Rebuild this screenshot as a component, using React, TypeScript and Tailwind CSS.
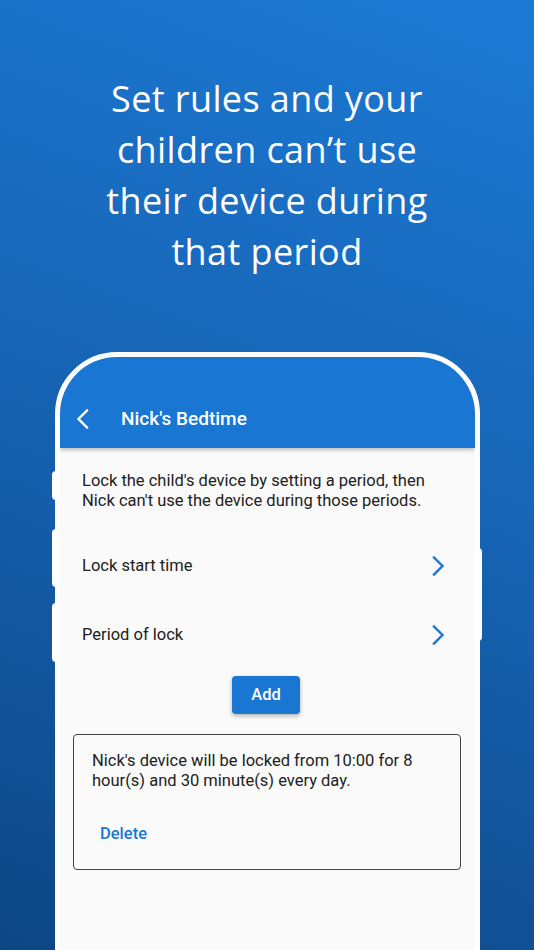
import React from "react";

function Chevron({ className }: { className?: string }) {
  return (
    <svg viewBox="0 0 14 22" className={className} fill="none">
      <path d="M3 2.5 L11.5 11 L3 19.5" stroke="currentColor" strokeWidth="2.4" strokeLinecap="square" />
    </svg>
  );
}

export default function App() {
  return (
    <div
      className="relative w-[534px] h-[950px] overflow-hidden bg-[linear-gradient(20deg,#0d4684,#1765b6_55%,#1c7ad5)]"
      style={{ fontFamily: "Roboto, 'Liberation Sans', sans-serif" }}
    >
      <h1
        className="pt-[73px] text-center text-white text-[36px] leading-[51px] font-normal tracking-[0.4px]"
        style={{ fontFamily: "'Open Sans', 'Liberation Sans', sans-serif" }}
      >
        Set rules and your
        <br />
        children can’t use
        <br />
        their device during
        <br />
        that period
      </h1>

      <div className="absolute left-[55px] top-[352px] w-[425px] h-[640px]">
        {/* side buttons */}
        <div className="absolute -left-[3px] top-[119px] w-[4px] h-[29px] bg-white rounded-l-sm" />
        <div className="absolute -left-[3px] top-[177px] w-[4px] h-[58px] bg-white rounded-l-sm" />
        <div className="absolute -left-[3px] top-[251px] w-[4px] h-[59px] bg-white rounded-l-sm" />
        <div className="absolute -right-[2px] top-[196px] w-[4px] h-[93px] bg-white rounded-r-sm" />

        <div className="h-full border-[5px] border-white rounded-t-[62px] bg-[#fafafa] overflow-hidden">
          <div className="h-[91px] bg-[#1976d2] flex items-end pb-[17px] shadow-[0_2px_4px_rgba(0,0,0,0.25)] relative z-10">
            <Chevron className="w-[14px] h-[22px] text-white ml-[16px] mb-[1px] rotate-180" />
            <div className="ml-[31px] text-white text-[19px] font-medium leading-[24px]">Nick's Bedtime</div>
          </div>

          <div className="pt-[23px] px-[22px] text-[16.5px] leading-[19.5px] text-[#212121]">
            Lock the child's device by setting a period, then
            <br />
            Nick can't use the device during those periods.
          </div>

          <div className="mt-[46px] flex items-center justify-between pl-[22px] pr-[30px] h-[20px] text-[16.5px] text-[#212121]">
            <span>Lock start time</span>
            <Chevron className="w-[14px] h-[22px] text-[#1976d2]" />
          </div>
          <div className="mt-[49px] flex items-center justify-between pl-[22px] pr-[30px] h-[20px] text-[16.5px] text-[#212121]">
            <span>Period of lock</span>
            <Chevron className="w-[14px] h-[22px] text-[#1976d2]" />
          </div>

          <div className="mt-[31px] flex justify-center pr-[3px]">
            <button className="w-[68px] h-[38px] rounded-[4px] bg-[#1976d2] text-white text-[16.5px] font-medium shadow-[0_2px_4px_rgba(0,0,0,0.3)]">
              Add
            </button>
          </div>

          <div className="mt-[20px] ml-[13px] w-[388px] h-[136px] border-[1.5px] border-[#444] rounded-[4px] px-[18px] pt-[16px]">
            <div className="text-[16.5px] leading-[20px] text-[#212121]">
              Nick's device will be locked from 10:00 for 8
              <br />
              hour(s) and 30 minute(s) every day.
            </div>
            <div className="mt-[31px] ml-[8px] text-[16.5px] font-medium text-[#1976d2]">Delete</div>
          </div>
        </div>
      </div>
    </div>
  );
}
